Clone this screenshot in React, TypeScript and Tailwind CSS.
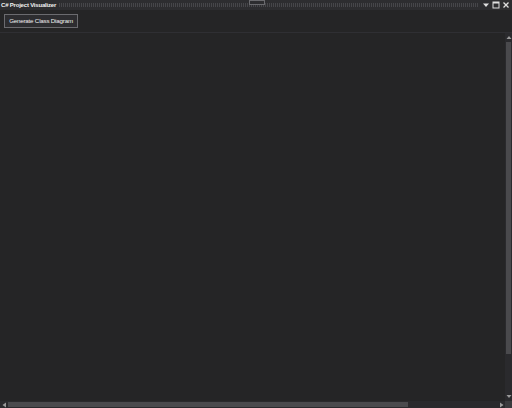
export default function App() {
  return (
    <div
      className="flex h-[408px] w-[512px] flex-col overflow-hidden bg-[#252526] text-white"
      style={{ fontFamily: '"Liberation Sans", Arial, sans-serif' }}
    >
      {/* Tool window title bar */}
      <div className="flex h-[10px] items-center bg-[#2d2d30] pl-[1px] pr-[2px]">
        <span className="whitespace-nowrap text-[6px] font-bold leading-none tracking-[-0.2px] text-[#f1f1f1]">
          C# Project Visualizer
        </span>
        <div className="relative ml-[3px] mr-[3px] h-[4px] flex-1 bg-[repeating-linear-gradient(90deg,#46464a_0px,#46464a_1px,transparent_1px,transparent_2px)]">
          <div className="absolute left-[190px] top-[-3px] h-[5px] w-[16px] border border-[#6a6a6e] bg-[#2d2d30]" />
        </div>
        <div className="flex items-center gap-[2px]">
          <svg width="8" height="8" viewBox="0 0 8 8">
            <path d="M1 2.5h6L4 6z" fill="#e0e0e0" />
          </svg>
          <svg width="8" height="8" viewBox="0 0 8 8">
            <rect x="1" y="1" width="6" height="6" fill="none" stroke="#e0e0e0" strokeWidth="1" />
            <rect x="1" y="1" width="6" height="1.5" fill="#e0e0e0" />
          </svg>
          <svg width="8" height="8" viewBox="0 0 8 8">
            <path d="M1.5 1.5l5 5M6.5 1.5l-5 5" stroke="#e0e0e0" strokeWidth="1.3" />
          </svg>
        </div>
      </div>

      {/* Toolbar */}
      <div className="flex h-[23px] items-center border-b border-[#2f2f33] px-[4px]">
        <button className="h-[14px] w-[74px] border border-[#6b6b6f] bg-[#2d2d30] text-[6.2px] leading-none tracking-[-0.2px] text-[#f1f1f1]">
          Generate Class Diagram
        </button>
      </div>

      {/* Canvas with scrollbars */}
      <div className="flex flex-1 flex-col">
        <div className="flex flex-1">
          <div className="flex-1 bg-[#252526]" />
          <div className="flex w-[7px] flex-col items-center bg-[#2a2a2d] py-[2px]">
            <svg width="6" height="5" viewBox="0 0 6 5">
              <path d="M0.5 4h5L3 1z" fill="#9a9a9a" />
            </svg>
            <div className="mt-[2px] h-[312px] w-[5px] bg-[#4a4a4d]" />
            <div className="flex-1" />
            <svg width="6" height="5" viewBox="0 0 6 5">
              <path d="M0.5 1h5L3 4z" fill="#9a9a9a" />
            </svg>
          </div>
        </div>
        <div className="flex h-[7px] items-center bg-[#2a2a2d]">
          <svg width="7" height="6" viewBox="0 0 7 6" className="ml-[1px]">
            <path d="M5 0.5v5L1.5 3z" fill="#9a9a9a" />
          </svg>
          <div className="h-[5px] w-[400px] bg-[#4a4a4d]" />
          <div className="flex-1" />
          <svg width="7" height="6" viewBox="0 0 7 6">
            <path d="M2 0.5v5L5.5 3z" fill="#9a9a9a" />
          </svg>
          <div className="h-[7px] w-[7px] bg-[#3a3a3d]" />
        </div>
      </div>
    </div>
  );
}
